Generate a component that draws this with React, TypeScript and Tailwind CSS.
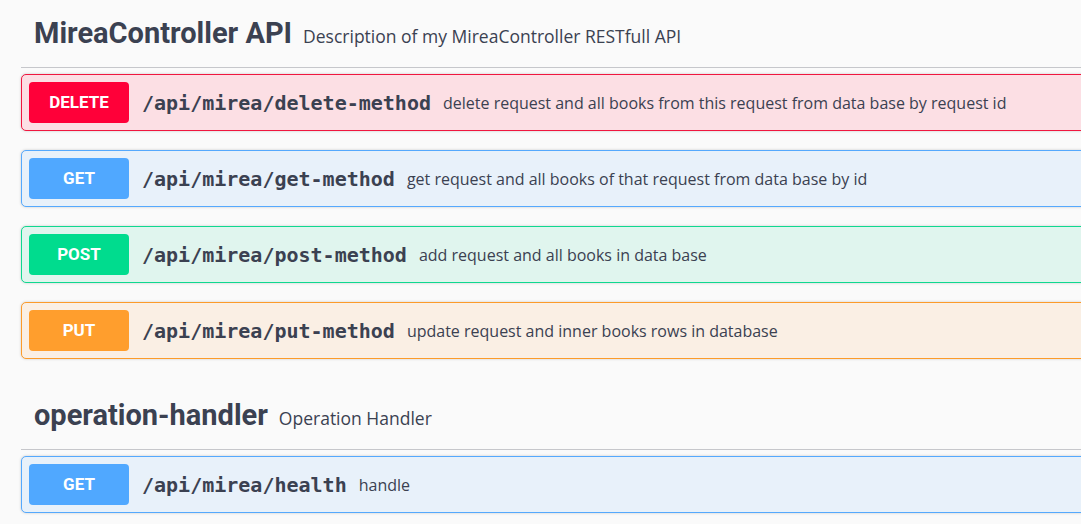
import React from 'react';

type Op = {
  method: 'DELETE' | 'GET' | 'POST' | 'PUT';
  path: string;
  summary: string;
};

const styles = {
  DELETE: {
    block: 'bg-[#fcdfe4] border-[#f0173f]',
    badge: 'bg-[#ff0039]',
  },
  GET: {
    block: 'bg-[#e8f1fa] border-[#55a9fd]',
    badge: 'bg-[#50a8ff]',
  },
  POST: {
    block: 'bg-[#e0f5ee] border-[#10d890]',
    badge: 'bg-[#00dc8e]',
  },
  PUT: {
    block: 'bg-[#faefe4] border-[#fc9b2a]',
    badge: 'bg-[#ff9e2d]',
  },
};

const sections: { name: string; description: string; ops: Op[] }[] = [
  {
    name: 'MireaController API',
    description: 'Description of my MireaController RESTfull API',
    ops: [
      {
        method: 'DELETE',
        path: '/api/mirea/delete-method',
        summary: 'delete request and all books from this request from data base by request id',
      },
      {
        method: 'GET',
        path: '/api/mirea/get-method',
        summary: 'get request and all books of that request from data base by id',
      },
      {
        method: 'POST',
        path: '/api/mirea/post-method',
        summary: 'add request and all books in data base',
      },
      {
        method: 'PUT',
        path: '/api/mirea/put-method',
        summary: 'update request and inner books rows in database',
      },
    ],
  },
  {
    name: 'operation-handler',
    description: 'Operation Handler',
    ops: [{ method: 'GET', path: '/api/mirea/health', summary: 'handle' }],
  },
];

function OpBlock({ op }: { op: Op }) {
  const s = styles[op.method];
  return (
    <div
      className={`flex items-center h-[57px] mb-[19px] px-[7px] border rounded-[5px] shadow-[0_0_3px_rgba(0,0,0,0.19)] ${s.block}`}
    >
      <span
        className={`w-[100px] h-[41px] shrink-0 flex items-center justify-center rounded-[4px] text-white text-[17px] font-bold font-['Roboto',sans-serif] ${s.badge}`}
      >
        {op.method}
      </span>
      <span className="pl-[13px] pr-[12px] text-[20px] font-bold text-[#3b4151] font-['DejaVu_Sans_Mono',monospace] whitespace-nowrap">
        {op.path}
      </span>
      <span className="text-[16px] text-[#3b4151] font-['Open_Sans',sans-serif] whitespace-nowrap">
        {op.summary}
      </span>
    </div>
  );
}

export default function App() {
  return (
    <div className="min-h-screen w-full overflow-hidden bg-[#fafafa]">
      <div className="pl-[21px] w-[1200px] flex flex-col">
        {sections.map((sec, i) => (
          <section key={sec.name} className={i > 0 ? 'mt-[4px]' : ''}>
            <div className="h-[68px] flex items-center pl-[13px] border-b border-[#c6c7cb]">
              <div className="flex items-baseline gap-[11px]">
                <h4 className="text-[29px] font-bold text-[#3b4151] font-['Roboto',sans-serif]">
                  {sec.name}
                </h4>
                <small className="text-[17.5px] text-[#3b4151] font-['Open_Sans',sans-serif]">
                  {sec.description}
                </small>
              </div>
            </div>
            <div className="pt-[6px] flex flex-col">
              {sec.ops.map((op) => (
                <OpBlock key={op.path} op={op} />
              ))}
            </div>
          </section>
        ))}
      </div>
    </div>
  );
}
